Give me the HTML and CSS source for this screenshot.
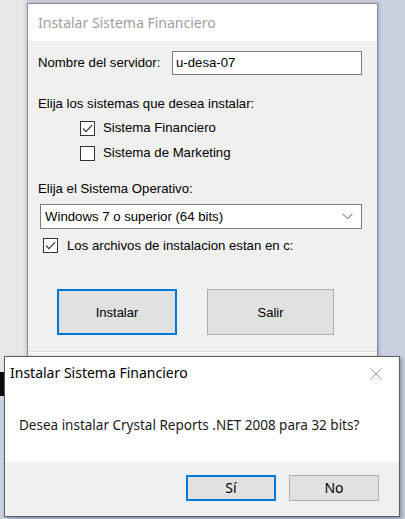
FILE: index.html
```html
<!DOCTYPE html>
<html lang="es">
<head>
<meta charset="utf-8">
<title>Instalar Sistema Financiero</title>
<link rel="stylesheet" href="styles.css">
</head>
<body>
<div class="desktop">
  <div class="bg-window"></div>
  <div class="bg-strip"></div>

  <div class="window main">
    <div class="titlebar inactive">Instalar Sistema Financiero</div>
    <div class="client">
      <div class="row server">
        <span class="label server-label">Nombre del servidor:</span>
        <div class="textbox">u-desa-07</div>
      </div>
      <div class="label section1">Elija los sistemas que desea instalar:</div>
      <div class="check sys1">
        <span class="box"><svg viewBox="0 0 13 13" width="13" height="13"><path d="M2 6.5 L5 9.6 L11.2 2.8" fill="none" stroke="#333" stroke-width="1.1"/></svg></span>
        <span class="label">Sistema Financiero</span>
      </div>
      <div class="check sys2">
        <span class="box"></span>
        <span class="label">Sistema de Marketing</span>
      </div>
      <div class="label section2">Elija el Sistema Operativo:</div>
      <div class="combo">
        <span class="combo-text">Windows 7 o superior (64 bits)</span>
        <svg class="chevron" viewBox="0 0 11 7" width="11" height="7"><path d="M0.5 0.8 L5.5 5.8 L10.5 0.8" fill="none" stroke="#555" stroke-width="1"/></svg>
      </div>
      <div class="check files">
        <span class="box"><svg viewBox="0 0 13 13" width="13" height="13"><path d="M2 6.5 L5 9.6 L11.2 2.8" fill="none" stroke="#333" stroke-width="1.1"/></svg></span>
        <span class="label">Los archivos de instalacion estan en c:</span>
      </div>
      <div class="buttons">
        <button class="btn default install">Instalar</button>
        <button class="btn exit">Salir</button>
      </div>
      <div class="separator"></div>
    </div>
  </div>

  <div class="window dialog">
    <div class="dlg-title">
      <span>Instalar Sistema Financiero</span>
      <svg class="close" viewBox="0 0 12 12" width="12" height="12"><path d="M0.5 0.5 L11.5 11.5 M11.5 0.5 L0.5 11.5" stroke="#a0a0a0" stroke-width="1" fill="none"/></svg>
    </div>
    <div class="dlg-message">Desea instalar Crystal Reports .NET 2008 para 32 bits?</div>
    <div class="dlg-footer">
      <button class="dbtn default">Sí</button>
      <button class="dbtn">No</button>
    </div>
  </div>
</div>
</body>
</html>
```

FILE: styles.css
```css
* { box-sizing: border-box; }
html, body { margin: 0; padding: 0; }
body {
  width: 405px;
  height: 519px;
  overflow: hidden;
  font-family: "Liberation Sans", Arial, sans-serif;
}
.desktop {
  position: relative;
  width: 405px;
  height: 519px;
  background: #c9d1e1;
}
.bg-window {
  position: absolute;
  left: 0;
  top: 0;
  width: 27px;
  height: 372px;
  background: linear-gradient(to right, #e7e7e7 0, #e7e7e7 22px, #d6d6d6 27px);
}
.bg-strip {
  position: absolute;
  left: 0;
  top: 372px;
  width: 5px;
  height: 24px;
  background: #0c0c0c;
}
.window {
  position: absolute;
}
.main {
  left: 27px;
  top: 3px;
  width: 351px;
  height: 380px;
  border: 1px solid #8a8a8a;
  background: #f0f0f0;
  box-shadow: 1px 0 3px rgba(80, 90, 110, 0.35);
}
.titlebar {
  height: 37px;
  background: #ffffff;
  padding-left: 10px;
  display: flex;
  align-items: center;
  font-family: "Noto Sans", "Open Sans", sans-serif;
  font-size: 14px;
  color: #a0a0a0;
}
.client {
  padding: 10px 0 0 10px;
  font-size: 13.2px;
  color: #000;
}
.label { line-height: 16px; white-space: nowrap; }
.row.server {
  display: flex;
  align-items: center;
  height: 24px;
}
.server-label { width: 134px; }
.textbox {
  width: 190px;
  height: 24px;
  background: #fff;
  border: 1px solid #7a7a7a;
  padding: 0 3px;
  line-height: 22px;
}
.section1 { margin-top: 21px; }
.check {
  display: flex;
  align-items: center;
  height: 16px;
}
.check .box {
  width: 15px;
  height: 15px;
  border: 1px solid #333;
  background: #fff;
  display: flex;
  align-items: center;
  justify-content: center;
  flex: none;
}
.check .box svg { display: block; }
.sys1 { margin-top: 8px; padding-left: 42px; }
.sys2 { margin-top: 9px; padding-left: 42px; }
.check .label { margin-left: 8px; }
.section2 { margin-top: 20px; }
.combo {
  margin-top: 7px;
  margin-left: 2px;
  width: 322px;
  height: 25px;
  background: #fff;
  border: 1px solid #7a7a7a;
  display: flex;
  align-items: center;
  justify-content: space-between;
  padding: 0 8px 0 4px;
}
.chevron { display: block; }
.files { margin-top: 8px; padding-left: 5px; height: 17px; }
.files .label { margin-left: 9px; }
.buttons {
  display: flex;
  margin-top: 35px;
  padding-left: 19px;
  gap: 30px;
}
.btn {
  height: 46px;
  background: #e1e1e1;
  border: 1px solid #adadad;
  font-family: "Liberation Sans", Arial, sans-serif;
  font-size: 13px;
  color: #000;
  padding: 0;
}
.install { width: 120px; }
.exit { width: 127px; }
.btn.default { border: 2px solid #0078d7; }
.separator {
  margin: 16px 0 0 -10px;
  height: 2px;
  border-top: 1px solid #dadada;
  border-bottom: 1px solid #fbfbfb;
}
.dialog {
  left: 4px;
  top: 356px;
  width: 396px;
  height: 161px;
  border: 1px solid #5c5c5c;
  background: #fff;
  box-shadow: 2px 2px 4px rgba(60, 70, 90, 0.45);
  display: flex;
  flex-direction: column;
  font-family: "Noto Sans", "Open Sans", sans-serif;
  color: #000;
}
.dlg-title {
  height: 31px;
  display: flex;
  align-items: center;
  justify-content: space-between;
  padding: 0 17px 0 5px;
  font-size: 14px;
}
.close { display: block; margin-top: 2px; }
.dlg-message {
  flex: 1;
  padding: 0 0 0 14px;
  display: flex;
  align-items: center;
  font-size: 13.5px;
  color: #1a1a1a;
}
.dlg-footer {
  height: 54px;
  background: #f0f0f0;
  display: flex;
  justify-content: flex-end;
  align-items: flex-start;
  padding: 13px 20px 0 0;
  gap: 13px;
}
.dbtn {
  width: 90px;
  height: 26px;
  background: #e1e1e1;
  border: 1px solid #adadad;
  font-family: "Noto Sans", "Open Sans", sans-serif;
  font-size: 14px;
  color: #000;
  padding: 0;
  line-height: 22px;
}
.dbtn.default { border: 2px solid #0078d7; }
```
